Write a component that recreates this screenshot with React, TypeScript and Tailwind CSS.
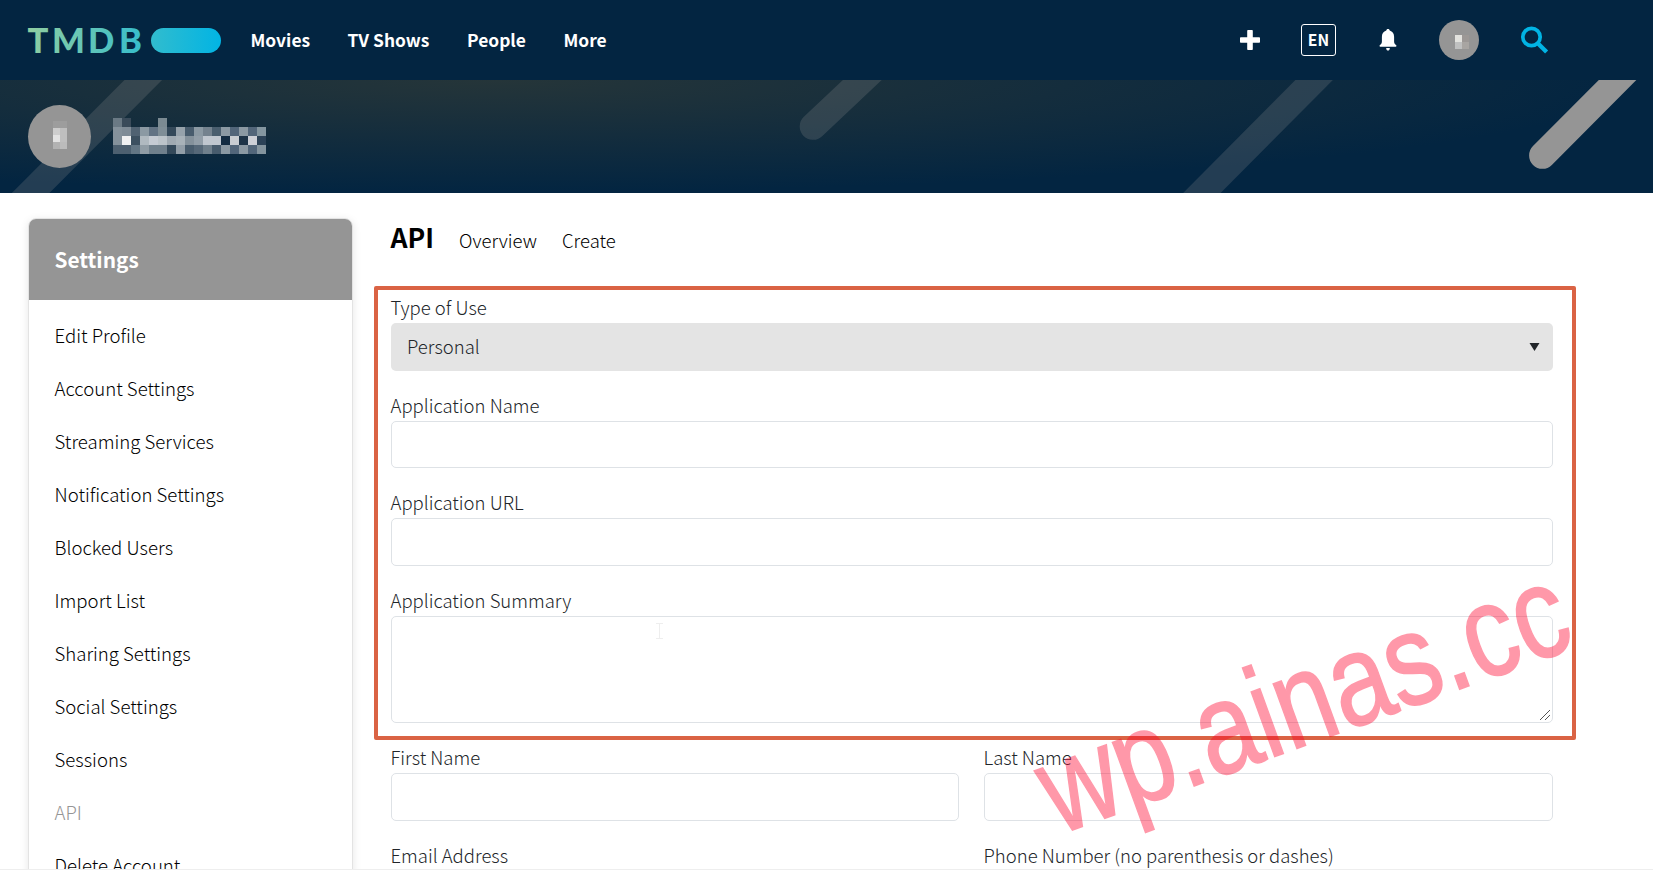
const navItems = [
  { label: "Movies", className: "w-[60px]" },
  { label: "TV Shows", className: "w-[82.5px]" },
  { label: "People", className: "w-[59.5px]" },
  { label: "More", className: "w-[46px]" },
];

const settingsLinks = [
  "Edit Profile",
  "Account Settings",
  "Streaming Services",
  "Notification Settings",
  "Blocked Users",
  "Import List",
  "Sharing Settings",
  "Social Settings",
  "Sessions",
  "API",
  "Delete Account",
];

// Pixelated user name, one entry per row of 9px cells
const nameMosaic = [
  "6a7984 3a4b5a - - - 7b8a92",
  "84919b 7f8c97 506272 8b99a3 627384 7f8e97 34495a 96a2ab 485c6d 8b99a3 74828e 4a5e6e 8b99a3 52667a 8b99a3 52667a 8496a0",
  "84919b f0f1f2 3c5060 b0b9c0 c5cbd3 bcc4ca a0aab2 a8b2b9 84919b 929ea8 c0c7cf c0c7cf 132c42 c8cdd2 1e3448 cdd0d7 2c4257",
  "4d6070 4d6070 637684 909ca5 70808c 70808c 34495a 929ea8 485c6d 566878 70808c 485c6d 8b99a3 52667a 8b99a3 52667a 84949e",
].map((row) => row.split(" "));

export default function App() {
  return (
    <div className="relative h-[870px] w-full overflow-hidden bg-white font-['Noto_Sans_CJK_SC',sans-serif] text-black">
      <TopBar />
      <ProfileBanner />
      <main className="flex gap-[38px] pt-[25px] pl-7">
        <Sidebar />
        <ApiForm />
      </main>
      <div className="absolute bottom-0 left-0 h-px w-full bg-[#eeeeee]" />
      <div className="absolute top-[286px] left-[374px] h-[454px] w-[1202px] rounded-[2px] border-4 border-[#da6344]" />
      <Overlay />
    </div>
  );
}

function TopBar() {
  return (
    <header className="flex h-20 items-center bg-[#032541] pr-[105px] pl-7 text-white">
      <Logo />
      <nav className="ml-[28.5px] flex gap-[37px] text-[17.4px] leading-6 font-bold whitespace-nowrap">
        {navItems.map((item) => (
          <span key={item.label} className={item.className}>
            {item.label}
          </span>
        ))}
      </nav>
      <div className="ml-auto flex items-center">
        <svg className="size-5" viewBox="0 0 20 20" fill="#fff">
          <path d="M8 0h4q.8 0 .8.8v6.4h6.4q.8 0 .8.8v4q0 .8-.8.8h-6.4v6.4q0 .8-.8.8H8q-.8 0-.8-.8v-6.4H.8Q0 12.8 0 12V8q0-.8.8-.8h6.4V.8Q7.2 0 8 0z" />
        </svg>
        <div className="ml-[41px] flex h-8 w-[35px] items-center justify-center rounded-[3px] border border-white text-[15.6px] leading-none font-bold">
          EN
        </div>
        <svg className="ml-[43px] h-[22px] w-[18px]" viewBox="0 0 18 22" fill="#fff">
          <path d="M9 0c1 0 1.700.7 1.700 1.600 2.800.8 4.400 3.200 4.400 6.100v4.800c0 1.800.9 2.800 2 3.500.5.4.5 1.700-.3 1.700H1.200c-.8 0-.8-1.300-.3-1.700 1.100-.7 2-1.700 2-3.500V7.700c0-2.900 1.600-5.300 4.400-6.100C7.300.7 8 0 9 0z" />
          <path d="M7.200 19h3.600c0 1.600-.8 2.600-1.800 2.600S7.200 20.600 7.200 19z" />
        </svg>
        <svg className="ml-[42px] size-10" viewBox="0 0 40 40">
          <circle cx="20" cy="20" r="20" fill="#959595" />
          <rect x="16" y="15" width="7" height="7" fill="#e2e2de" />
          <rect x="23" y="15" width="7" height="7" fill="#9c9896" />
          <rect x="16" y="22" width="7" height="7" fill="#bfc0c0" />
          <rect x="23" y="22" width="7" height="7" fill="#a8a5a2" />
        </svg>
        <svg className="ml-[42px] size-[27px] overflow-visible" viewBox="0 0 27 27" fill="none" stroke="#01b4e4">
          <circle cx="10.5" cy="10" r="8.7" strokeWidth="3.7" />
          <path d="M16.5 16l9.100 9.100" strokeWidth="4.300" />
        </svg>
      </div>
    </header>
  );
}

function Logo() {
  return (
    <svg className="h-[30px] w-[194px] overflow-visible" viewBox="0 0 194 30">
      <defs>
        <linearGradient id="logo" gradientUnits="userSpaceOnUse" x1="0" y1="0" x2="194" y2="0">
          <stop offset="0" stopColor="#90cea1" />
          <stop offset=".55" stopColor="#3cbec9" />
          <stop offset="1" stopColor="#01b4e4" />
        </linearGradient>
      </defs>
      <text x="-0.5 24 60 91" y="28" className="font-['Lato',sans-serif] text-[34.6px] font-black" fill="url(#logo)">
        TMDB
      </text>
      <rect x="123" y="3" width="70" height="25" rx="12.5" fill="url(#logo)" />
    </svg>
  );
}

function ProfileBanner() {
  return (
    <section className="h-[113px] bg-[radial-gradient(at_30%_top,#253539_0%,#032541_70%)]">
      <svg className="block h-[113px] w-full" viewBox="0 0 1653 113">
        <g fill="none" stroke="#959595" strokeWidth="26.6">
          <g opacity=".22">
            <path d="M163.2-20L10.700 133" />
            <path d="M883.5-20L813 46.500" strokeLinecap="round" />
            <path d="M1334-20L1182 133" />
          </g>
          <path d="M1637.5-20L1542.400 75.500" strokeLinecap="round" />
        </g>
        <circle cx="59.5" cy="56.5" r="31.5" fill="#959595" />
        <rect x="53" y="41" width="14" height="7" fill="#9d9d9d" />
        <rect x="53" y="48" width="7" height="7" fill="#cdcdcd" />
        <rect x="53" y="55" width="7" height="7" fill="#e2e2e2" />
        <rect x="60" y="48" width="7" height="14" fill="#bfbfbf" />
        <rect x="53" y="62" width="7" height="7" fill="#b2b2b2" />
        <rect x="60" y="62" width="7" height="7" fill="#bbbbbb" />
        {nameMosaic.map((row, y) =>
          row.map((color, x) =>
            color === "-" ? null : (
              <rect key={`${x}-${y}`} x={113 + x * 9} y={38 + y * 9} width="9" height="9" fill={`#${color}`} />
            ),
          ),
        )}
      </svg>
    </section>
  );
}

function Sidebar() {
  return (
    <aside className="h-[760px] w-[325px] shrink-0 rounded-t-lg border border-[#e3e3e3] shadow-[0_2px_8px_rgba(0,0,0,0.1)]">
      <h2 className="flex h-[81px] items-center rounded-t-[7px] bg-[#959595] pl-[25.5px] text-[20.8px] font-bold text-white">
        Settings
      </h2>
      <ul className="pt-2 pl-[25.5px] text-[18.6px] leading-[53px] font-light">
        {settingsLinks.map((link) => (
          <li key={link} className={link === "API" ? "text-[#959595]" : ""}>
            {link}
          </li>
        ))}
      </ul>
    </aside>
  );
}

function Label({ text }: { text: string }) {
  return (
    <label className="mt-[22px] -ml-[0.5px] block h-7 text-[18.5px] leading-6 font-light text-[#212529]">{text}</label>
  );
}

function ApiForm() {
  return (
    <section className="w-[1162px] text-[18.5px] font-light">
      <div className="-ml-[0.5px] flex h-[55px] items-baseline gap-[25px] pt-[1.5px] leading-[34px]">
        <h1 className="text-[26.6px] font-bold">API</h1>
        <span>Overview</span>
        <span>Create</span>
      </div>
      <Label text="Type of Use" />
      <div className="flex h-12 items-center justify-between rounded-[5px] bg-[#e4e4e4] pr-[13px] pl-4 text-[#212529]">
        Personal
        <svg className="h-2 w-[11px]" viewBox="0 0 11 8" fill="#212529">
          <path d="M.5 0h10L5.5 8z" />
        </svg>
      </div>
      <Label text="Application Name" />
      <div className="h-[47px] rounded-[5px] border border-[#dee2e6]" />
      <Label text="Application URL" />
      <div className="h-12 rounded-[5px] border border-[#dee2e6]" />
      <Label text="Application Summary" />
      <div className="flex h-[107px] items-end justify-end rounded-[5px] border border-[#dee2e6] pr-0.5 pb-0.5">
        <svg className="size-[10px]" viewBox="0 0 10 10" stroke="#555555" fill="none">
          <path d="M0 10L10 0M5 10l5-5" />
        </svg>
      </div>
      <div className="grid grid-cols-[568px_569px] gap-x-[25px]">
        <div>
          <Label text="First Name" />
          <div className="h-12 rounded-[5px] border border-[#dee2e6]" />
          <Label text="Email Address" />
        </div>
        <div>
          <Label text="Last Name" />
          <div className="h-12 rounded-[5px] border border-[#dee2e6]" />
          <Label text="Phone Number (no parenthesis or dashes)" />
        </div>
      </div>
    </section>
  );
}

// Text cursor and diagonal watermark drawn over the page
function Overlay() {
  return (
    <svg className="pointer-events-none absolute top-0 left-0 h-[870px] w-[1653px]" viewBox="0 0 1653 870">
      <path d="M656 623.5h7M659.5 624v15M656 638.5h7" stroke="#eeeeee" fill="none" />
      <text
        transform="translate(1057.7 835.6) rotate(-20) scale(.815 1)"
        className="font-['Liberation_Sans',sans-serif] text-[130px] font-normal"
        fill="#ff002b"
        stroke="#ff002b"
        strokeWidth="1.6"
        opacity=".4"
      >
        wp.ainas.cc
      </text>
    </svg>
  );
}
